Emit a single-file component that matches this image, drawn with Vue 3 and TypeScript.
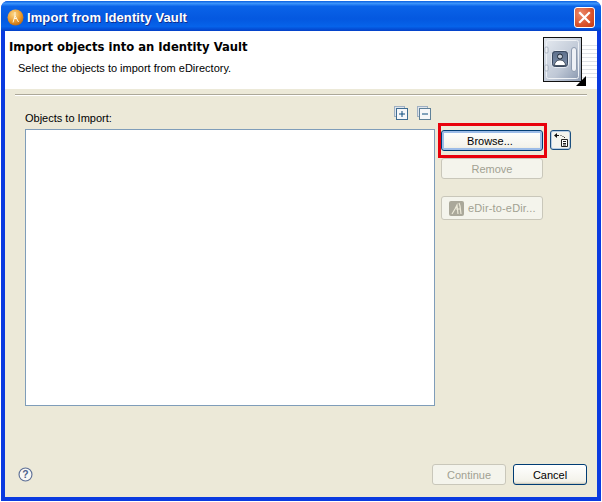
<script setup lang="ts">
const title = 'Import from Identity Vault'
</script>

<template>
  <div class="window">
    <div class="titlebar">
      <svg class="appicon" width="17" height="17" viewBox="0 0 17 17">
        <defs>
          <radialGradient id="ball" cx="40%" cy="30%" r="75%">
            <stop offset="0" stop-color="#fbd98c" />
            <stop offset="0.6" stop-color="#ea9a2c" />
            <stop offset="1" stop-color="#b8650f" />
          </radialGradient>
        </defs>
        <circle cx="8.500" cy="8.500" r="8" fill="url(#ball)" />
        <path d="M8 3v3.500M8 6.500l-2 7M8 6.500l3.500 6.500M7 9.500h3" stroke="#fff6e0" stroke-width="1" fill="none" />
      </svg>
      <span class="title-text">{{ title }}</span>
      <button class="close" aria-label="Close">
        <svg width="13" height="13" viewBox="0 0 13 13">
          <path d="M2 2l9 9M11 2l-9 9" stroke="#fff" stroke-width="2.2" stroke-linecap="square" />
        </svg>
      </button>
    </div>
    <div class="client">
      <div class="banner">
        <div class="banner-text">
          <div class="banner-title">Import objects into an Identity Vault</div>
          <div class="banner-sub">Select the objects to import from eDirectory.</div>
        </div>
        <svg class="vault" width="54" height="49" viewBox="0 0 54 49">
          <defs>
            <linearGradient id="steel" x1="0" y1="0" x2="1" y2="1">
              <stop offset="0" stop-color="#e2e7ee" />
              <stop offset="0.6" stop-color="#bfc8d6" />
              <stop offset="1" stop-color="#8d9bb2" />
            </linearGradient>
            <linearGradient id="plate" x1="0" y1="0" x2="0" y2="1">
              <stop offset="0" stop-color="#5c6e8a" />
              <stop offset="1" stop-color="#7f90aa" />
            </linearGradient>
          </defs>
          <g stroke="#dfe2e7" stroke-width="1">
            <path d="M39 8.500h15M39 12.500h15M39 16.500h15M39 20.500h15M39 24.500h15M39 28.500h15M39 32.500h15M39 36.500h15M39 40.500h15" />
          </g>
          <rect x="0.500" y="0.500" width="38" height="44" fill="url(#steel)" stroke="#111" />
          <rect x="3.500" y="3.500" width="32" height="38" rx="2" fill="url(#steel)" stroke="#eef1f5" />
          <rect x="2" y="10" width="3" height="6" rx="1" fill="#eef1f5" stroke="#78869a" stroke-width="0.500" />
          <rect x="2" y="28" width="3" height="6" rx="1" fill="#eef1f5" stroke="#78869a" stroke-width="0.500" />
          <rect x="28.500" y="10.500" width="5" height="24" rx="2.500" fill="#eef1f6" stroke="#8d9aae" />
          <rect x="8.500" y="13.500" width="17" height="17" rx="3.500" fill="url(#plate)" stroke="#e6eaf0" />
          <rect x="9.500" y="14.500" width="15" height="15" rx="3" fill="none" stroke="#39475d" />
          <circle cx="17" cy="19.500" r="2.500" fill="#c8cfda" stroke="#1d2836" />
          <path d="M11.500 28.500c0-3 2-5.500 5.500-5.500s5.500 2.500 5.500 5.500z" fill="#fff" stroke="#1d2836" stroke-width="0.700" />
          <path d="M43 39v10H33z" fill="#000" />
        </svg>
      </div>
      <div class="body">
        <div class="rule"></div>
        <div class="content">
          <div class="left">
            <div class="list-head">
              <span class="label">Objects to Import:</span>
              <div class="tree-tools">
                <svg width="14" height="14" viewBox="0 0 14 14">
                  <rect x="0.500" y="0.500" width="10" height="10" fill="#dfe5ec" stroke="#9fb0c2" />
                  <rect x="2.500" y="2.500" width="11" height="11" fill="#f6f7f9" stroke="#3f6d92" />
                  <path d="M8 5v6M5 8h6" stroke="#0d4c7f" stroke-width="1" />
                </svg>
                <svg width="14" height="14" viewBox="0 0 14 14">
                  <rect x="0.500" y="0.500" width="10" height="10" fill="#dfe5ec" stroke="#9fb0c2" />
                  <rect x="2.500" y="2.500" width="11" height="11" fill="#f6f7f9" stroke="#5f8199" />
                  <path d="M5 8h6" stroke="#0d4c7f" stroke-width="1" />
                </svg>
              </div>
            </div>
            <div class="listbox"></div>
          </div>
          <div class="side">
            <div class="browse-row">
              <div class="highlight">
                <button class="btn focus wide">Browse...</button>
              </div>
              <button class="tool" aria-label="Add">
                <svg width="17" height="16" viewBox="0 0 17 16">
                  <path d="M9.500 7.500h6v7h-6z" fill="#fff" stroke="#222" />
                  <path d="M11 9.500h3M11 11.500h3M11 13h3" stroke="#222" />
                  <path d="M2 3.500l3-2.500v5z" fill="#111" />
                  <path d="M5 3.500h2" stroke="#111" />
                  <path d="M8.500 3.500h1M10.500 4.500h1M12 5.500h1" stroke="#333" />
                </svg>
              </button>
            </div>
            <button class="btn wide remove" disabled>Remove</button>
            <button class="btn wide edir" disabled>
              <svg width="15" height="15" viewBox="0 0 15 15">
                <rect width="15" height="15" rx="2" fill="#aaa89a" />
                <path d="M3 13l3-5 2-4 1 9M7 8h4M10 2l1 3 1 8" stroke="#ece9d8" stroke-width="1.200" fill="none" />
              </svg>
              <span>eDir-to-eDir...</span>
            </button>
          </div>
        </div>
        <div class="footer">
          <svg class="help" width="15" height="15" viewBox="0 0 16 16">
            <circle cx="8" cy="8" r="6.900" fill="#f7f7f4" stroke="#5d6f96" stroke-width="1.200" />
            <text x="8" y="12" text-anchor="middle" class="help-mark">?</text>
          </svg>
          <div class="actions">
            <button class="btn action" disabled>Continue</button>
            <button class="btn action default">Cancel</button>
          </div>
        </div>
      </div>
    </div>
  </div>
</template>

<style>
html, body { margin: 0; background: #fff; }
</style>

<style scoped>
.window {
  box-sizing: border-box;
  width: 600px;
  height: 500px;
  margin: 1px 0 0 1px;
  padding: 0 4px 4px;
  background: #0a3ae0;
  border-radius: 7px 7px 0 0;
  font-family: "Liberation Sans", sans-serif;
  font-size: 11px;
  color: #000;
  display: flex;
  flex-direction: column;
}
.titlebar {
  flex: none;
  height: 30px;
  margin: 0 -4px;
  padding: 2px 6px 0;
  box-sizing: border-box;
  display: flex;
  align-items: center;
  gap: 3px;
  border-radius: 7px 7px 0 0;
  background: linear-gradient(180deg, #0a5fe0 0, #3b94fb 8%, #0a63e8 18%, #0458e0 60%, #0663ea 85%, #0340c8 100%);
}
.appicon { flex: none; }
.title-text {
  flex: 1;
  color: #fff;
  font-weight: 700;
  font-size: 13px;
  letter-spacing: 0.1px;
  padding-top: 1px;
  text-shadow: 1px 1px 0 #0f2f8f;
}
.close {
  width: 21px;
  height: 21px;
  padding: 0;
  border: 1px solid #fff;
  border-radius: 3px;
  background: radial-gradient(circle at 30% 30%, #ec8a6b, #d9532c 60%, #c23a12);
  display: flex;
  align-items: center;
  justify-content: center;
}
.client {
  flex: 1;
  min-height: 0;
  background: #ece9d8;
  display: flex;
  flex-direction: column;
}
.banner {
  flex: none;
  height: 58px;
  background: #fff;
  padding: 0 0 0 4px;
  display: flex;
  align-items: flex-start;
  justify-content: space-between;
}
.banner-title {
  margin-top: 9px;
  font-family: "DejaVu Sans", sans-serif;
  font-weight: 700;
  font-size: 11.6px;
  line-height: 14px;
}
.banner-sub {
  margin: 8px 0 0 9px;
  line-height: 13px;
}
.vault { margin: 6px 0 0 0; }
.body {
  flex: 1;
  min-height: 0;
  display: flex;
  flex-direction: column;
  padding: 5px 5px 0 10px;
}
.rule {
  height: 1px;
  background: #aca899;
  border-bottom: 1px solid #fff;
  margin-right: 5px;
  flex: none;
}
.content {
  flex: 1;
  min-height: 0;
  display: flex;
  padding-left: 10px;
  gap: 6px;
}
.left {
  width: 410px;
  flex: none;
}
.list-head {
  height: 33px;
  position: relative;
}
.label {
  position: absolute;
  left: 0;
  top: 16px;
  line-height: 13px;
}
.tree-tools {
  position: absolute;
  right: 4px;
  top: 10px;
  display: flex;
  gap: 9px;
}
.listbox {
  box-sizing: border-box;
  height: 277px;
  background: #fff;
  border: 1px solid #7f9db9;
}
.side {
  display: flex;
  flex-direction: column;
  padding-top: 34px;
}
.browse-row {
  display: flex;
  align-items: flex-start;
  gap: 7px;
}
.highlight {
  position: relative;
  width: 102px;
  height: 21px;
}
.highlight::after {
  content: "";
  position: absolute;
  inset: -7px -4px -7px -3px;
  border: 3px solid #e8000b;
  pointer-events: none;
}
.btn {
  box-sizing: border-box;
  height: 21px;
  padding: 0;
  font: inherit;
  color: #000;
  border: 1px solid #003c74;
  border-radius: 3px;
  background: linear-gradient(180deg, #fff, #f3f2ea 85%, #dcd8ca);
}
.wide { width: 102px; }
.btn:disabled {
  color: #a1a192;
  border-color: #c9c7ba;
  background: #f4f4ec;
}
.focus {
  box-shadow: inset 0 0 0 2px #9dbce8;
  display: block;
  padding-right: 4px;
}
.remove { margin-top: 7px; }
.edir {
  margin-top: 17px;
  height: 24px;
  display: flex;
  align-items: center;
  gap: 4px;
  padding: 0 0 0 7px;
  letter-spacing: 0.15px;
}
.tool {
  box-sizing: border-box;
  width: 21px;
  height: 20px;
  padding: 0;
  border: 1px solid #1c4f7f;
  border-radius: 3px;
  background: #f4f4ee;
  box-shadow: inset 0 0 0 1px #b9cde4;
  display: flex;
  align-items: center;
  justify-content: center;
}
.footer {
  flex: none;
  height: 40px;
  box-sizing: border-box;
  display: flex;
  align-items: flex-start;
  justify-content: space-between;
  padding: 7px 0 0;
}
.help { margin: 3px 0 0 3px; }
.help-mark {
  font-weight: 700;
  font-size: 11px;
  fill: #4b5f8c;
}
.actions {
  display: flex;
  gap: 7px;
  padding-right: 5px;
}
.action {
  width: 74px;
  height: 21px;
}
.default {
  box-shadow: inset 0 -1px 0 #cfcdbf;
}
</style>
